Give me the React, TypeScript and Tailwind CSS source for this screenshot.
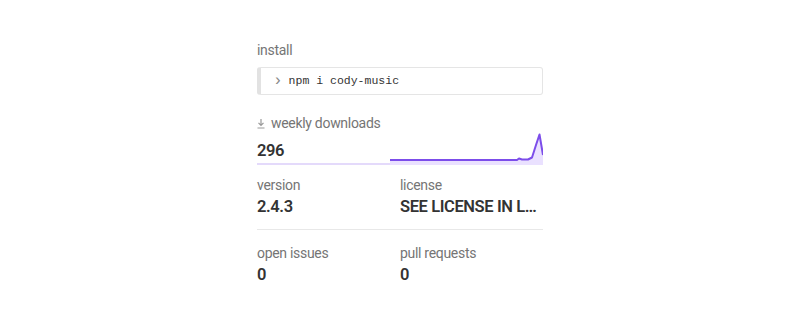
import React from "react";

const font = { fontFamily: '"Source Sans Pro", Roboto, "Noto Sans", sans-serif' };

function Stat({ label, value }: { label: string; value: string }) {
  return (
    <div className="min-w-0">
      <h3 className="text-[14px] leading-6 tracking-[-0.3px] text-[#757575]">{label}</h3>
      <p className="-mt-[2px] truncate text-[16.5px] font-semibold leading-6 tracking-[-0.4px] text-[#333]">{value}</p>
    </div>
  );
}

function Sparkline() {
  return (
    <svg width="153" height="32" viewBox="0 0 153 32" className="block">
      <path
        d="M0 27 L127 27 L129 25.5 L132 26.5 L138 26.5 L142 24.5 L146 12 L149.5 1.5 L153 22 L153 32 L0 32 Z"
        fill="#8956ff"
        fillOpacity="0.18"
      />
      <path
        d="M0 27 L127 27 L129 25.5 L132 26.5 L138 26.5 L142 24.5 L146 12 L149.5 1.5 L153 22"
        fill="none"
        stroke="#7c4dea"
        strokeWidth="2"
        strokeLinejoin="round"
      />
    </svg>
  );
}

export default function App() {
  return (
    <div className="min-h-[320px] bg-white" style={font}>
      <div className="mx-auto w-[286px] pt-[38px]">
        {/* install */}
        <h3 className="text-[14px] leading-6 tracking-[-0.3px] text-[#757575]">install</h3>
        <div className="mt-[5px] flex h-[28px] items-center rounded-[3px] border border-[#e5e5e5] border-l-4 border-l-[#e2e2e2] pl-[12px] font-['Liberation_Mono',monospace] text-[11.5px] text-[#333]">
          <span className="mr-[6px] text-[16px] leading-none text-[#888]">›</span>
          <code>npm i cody-music</code>
        </div>

        {/* weekly downloads */}
        <div className="mt-[16px]">
          <h3 className="flex items-center text-[14px] leading-6 tracking-[-0.3px] text-[#757575]">
            <svg width="8" height="11" viewBox="0 0 8 11" className="mr-[6px]">
              <path d="M4 1 V7 M1.5 4.8 L4 7.3 L6.5 4.8 M0.5 10 H7.5" fill="none" stroke="#999" strokeWidth="1.2" />
            </svg>
            weekly downloads
          </h3>
          <div className="-mt-[2px] flex items-end">
            <div className="w-[133px] border-b-2 border-[#e4dafb]">
              <p className="text-[16.5px] font-semibold leading-6 tracking-[-0.4px] text-[#333]">296</p>
            </div>
            <Sparkline />
          </div>
        </div>

        {/* version / license */}
        <div className="mt-[8px] grid grid-cols-2 border-b border-[#e8e8e8] pb-[10px]">
          <Stat label="version" value="2.4.3" />
          <div className="min-w-0 pr-[2px]">
            <Stat label="license" value="SEE LICENSE IN LICENSE" />
          </div>
        </div>

        {/* issues / PRs */}
        <div className="mt-[11px] grid grid-cols-2">
          <Stat label="open issues" value="0" />
          <Stat label="pull requests" value="0" />
        </div>
      </div>
    </div>
  );
}
